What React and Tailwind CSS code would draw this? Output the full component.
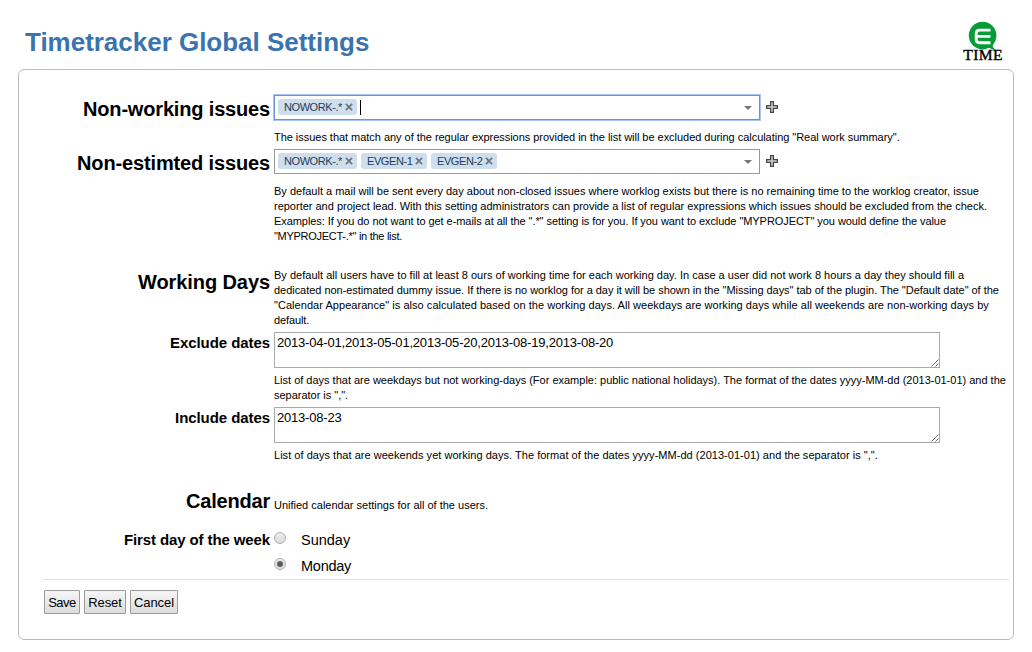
import React from "react";

function Label({ children, className }) {
  return (
    <div className={`w-[251px] shrink-0 whitespace-nowrap text-right font-bold ${className}`}>
      {children}
    </div>
  );
}

function Help({ lines, className = "" }) {
  return (
    <div className={`text-[11px] leading-[15px] whitespace-nowrap ${className}`}>
      {lines.map(([text, tracking]) => (
        <div key={text} className={tracking}>{text}</div>
      ))}
    </div>
  );
}

function Chip({ text, width }) {
  return (
    <span className={`flex h-4 shrink-0 items-center justify-between rounded-[3px] bg-[#cfdeec] pl-[6px] pr-[4px] text-[11px] leading-4 text-[#1f3c5a] ${width}`}>
      <span className="tracking-[-0.42px]">{text}</span>
      <svg width="8" height="8" viewBox="0 0 8 8" className="shrink-0">
        <path d="M0.9 0.9 7.1 7.1M7.1 0.9 0.9 7.1" stroke="#6c747c" strokeWidth="1.7" fill="none" />
      </svg>
    </span>
  );
}

function MultiSelect({ items, focused }) {
  return (
    <div className="flex items-center gap-[6px]">
      <div
        className={`flex h-[25px] w-[486px] items-start gap-1 border bg-white pt-[3px] pl-[3px] pr-[7px] ${
          focused ? "border-[#6691dd] shadow-[0_0_0_1px_#a9c5f3]" : "border-[#999999]"
        }`}
      >
        {items.map(([text, width]) => (
          <Chip key={text} text={text} width={width} />
        ))}
        {focused && <span className="mt-px -ml-px h-[15px] w-px bg-black" />}
        <svg width="8" height="4" viewBox="0 0 8 4" className="mt-[7px] ml-auto">
          <path d="M0 0H8L4 4Z" fill="#777777" />
        </svg>
      </div>
      <svg width="12" height="12" viewBox="0 0 12 12" className="-mt-px">
        <path d="M4.6 0.6H7.4V4.6H11.4V7.4H7.4V11.4H4.6V7.4H0.6V4.6H4.6Z" fill="#d0d0d0" stroke="#484848" strokeWidth="1.3" />
      </svg>
    </div>
  );
}

function TextArea({ text, tracking }) {
  return (
    <div className="flex h-9 w-[666px] justify-between border border-[#a9a9a9] bg-white pl-[2px]">
      <span className={`pt-[2px] text-[13px] leading-[15px] ${tracking}`}>{text}</span>
      <svg width="8" height="8" viewBox="0 0 8 8" className="self-end">
        <path d="M0.5 7.5 7.5 0.5M4.5 7.5 7.5 4.5" stroke="#6f6f6f" strokeWidth="1" fill="none" />
      </svg>
    </div>
  );
}

function Radio({ label, checked, tracking }) {
  return (
    <div className="flex h-[17px] items-start gap-[15px]">
      <span className="mt-px flex size-3 items-center justify-center rounded-full border border-[#b2b2b2] bg-linear-to-b from-[#ececec] to-[#dcdcdc]">
        {checked && <span className="size-[6px] rounded-full bg-[#5c5c5c]" />}
      </span>
      <span className={`pt-px text-[14.5px] leading-[17px] ${tracking}`}>{label}</span>
    </div>
  );
}

function Button({ children, className }) {
  return (
    <button className={`h-6 rounded-[1px] border border-[#9c9c9c] bg-linear-to-b from-[#f6f6f6] to-[#dcdcdc] pt-px text-center text-[13px] leading-[22px] ${className}`}>
      {children}
    </button>
  );
}

function Logo() {
  return (
    <svg width="42" height="42" viewBox="0 0 42 42">
      <circle cx="20.6" cy="14.6" r="13.8" fill="#079c36" />
      <path d="M25 26 31.5 23 30.6 25.4 34.5 30.5 31 28.5Z" fill="#079c36" />
      <path
        d="M28.5 9.1H17.6Q14.2 9.1 14.2 12.3V18.5Q14.2 21.7 17.6 21.7H28.5M14.2 15.4H28.5"
        stroke="#ffffff"
        strokeWidth="2.9"
        fill="none"
      />
      <text x="1.2" y="39" textLength="39.4" fontFamily="'Liberation Serif', serif" fontSize="15.6" fill="#000000" stroke="#000000" strokeWidth="0.4">
        TIME
      </text>
    </svg>
  );
}

const BIG = "text-[20px] leading-[23px]";
const SMALL = "text-[15px] leading-[17px]";

export default function App() {
  return (
    <div className="h-[652px] w-[1032px] overflow-hidden bg-white font-['Liberation_Sans',Arial,sans-serif] text-black">
      <header className="flex h-[69px] items-start justify-between pl-[25px] pr-[28px]">
        <h1 className="mt-[27px] whitespace-nowrap text-[26px] leading-[30px] font-bold tracking-[-0.02px] text-[#3b73af]">
          Timetracker Global Settings
        </h1>
        <div className="mt-[21px]">
          <Logo />
        </div>
      </header>

      <main className="ml-[18px] flex h-[571px] w-[996px] flex-col rounded-[6px] border border-[#bbbbbb]">
        <section className="mt-[25px] flex gap-1">
          <Label className={`${BIG} pt-[3px] tracking-[-0.17px]`}>Non-working issues</Label>
          <div>
            <MultiSelect focused items={[["NOWORK-.*", "w-[79px]"]]} />
            <Help
              className="mt-[10px]"
              lines={[
                ['The issues that match any of the regular expressions provided in the list will be excluded during calculating "Real work summary".', "tracking-[-0.035px]"],
              ]}
            />
          </div>
        </section>

        <section className="mt-1 flex gap-1">
          <Label className={`${BIG} pt-[3px] tracking-[-0.14px]`}>Non-estimted issues</Label>
          <div>
            <MultiSelect
              items={[
                ["NOWORK-.*", "w-[79px]"],
                ["EVGEN-1", "w-[66px]"],
                ["EVGEN-2", "w-[66px]"],
              ]}
            />
            <Help
              className="mt-[10px]"
              lines={[
                ["By default a mail will be sent every day about non-closed issues where worklog exists but there is no remaining time to the worklog creator, issue", "tracking-[0.004px]"],
                ["reporter and project lead. With this setting administrators can provide a list of regular expressions which issues should be excluded from the check.", "tracking-[-0.008px]"],
                ['Examples: If you do not want to get e-mails at all the ".*" setting is for you. If you want to exclude "MYPROJECT" you would define the value', "tracking-[-0.063px]"],
                ['"MYPROJECT-.*" in the list.', "tracking-[-0.28px]"],
              ]}
            />
          </div>
        </section>

        <section className="mt-6 flex gap-1">
          <Label className={`${BIG} pt-[3px] tracking-[-0.08px]`}>Working Days</Label>
          <Help
            lines={[
              ["By default all users have to fill at least 8 ours of working time for each working day. In case a user did not work 8 hours a day they should fill a", "tracking-[0.016px]"],
              ['dedicated non-estimated dummy issue. If there is no worklog for a day it will be shown in the "Missing days" tab of the plugin. The "Default date" of the', "tracking-[-0.035px]"],
              ['"Calendar Appearance" is also calculated based on the working days. All weekdays are working days while all weekends are non-working days by', "tracking-[0.045px]"],
              ["default.", "tracking-[-0.1px]"],
            ]}
          />
        </section>

        <section className="mt-1 flex gap-1">
          <Label className={`${SMALL} pt-[2px] tracking-[-0.07px]`}>Exclude dates</Label>
          <div>
            <TextArea text="2013-04-01,2013-05-01,2013-05-20,2013-08-19,2013-08-20" tracking="tracking-[-0.2px]" />
            <Help
              className="mt-[5px]"
              lines={[
                ["List of days that are weekdays but not working-days (For example: public national holidays). The format of the dates yyyy-MM-dd (2013-01-01) and the", "tracking-[-0.007px]"],
                ['separator is ",".', "tracking-[-0.02px]"],
              ]}
            />
          </div>
        </section>

        <section className="mt-1 flex gap-1">
          <Label className={`${SMALL} pt-[2px] tracking-[-0.07px]`}>Include dates</Label>
          <div>
            <TextArea text="2013-08-23" tracking="tracking-[-0.2px]" />
            <Help
              className="mt-[5px]"
              lines={[
                ['List of days that are weekends yet working days. The format of the dates yyyy-MM-dd (2013-01-01) and the separator is ",".', "tracking-[0.031px]"],
              ]}
            />
          </div>
        </section>

        <section className="mt-[27px] flex gap-1">
          <Label className={`${BIG} tracking-[-0.2px]`}>Calendar</Label>
          <Help className="pt-2" lines={[["Unified calendar settings for all of the users.", "tracking-normal"]]} />
        </section>

        <section className="mt-[18px] flex gap-1">
          <Label className={`${SMALL} tracking-[-0.11px]`}>First day of the week</Label>
          <div className="flex flex-col gap-[9px]">
            <Radio label="Sunday" tracking="tracking-normal" />
            <Radio label="Monday" checked tracking="tracking-[-0.25px]" />
          </div>
        </section>

        <footer className="mt-[5px] mr-1 ml-6 flex gap-1 border-t border-[#dddddd] pt-[10px] pl-px">
          <Button className="w-9 tracking-[-0.5px]">Save</Button>
          <Button className="w-[42px] tracking-[-0.1px]">Reset</Button>
          <Button className="w-12 tracking-[-0.05px]">Cancel</Button>
        </footer>
      </main>
    </div>
  );
}
